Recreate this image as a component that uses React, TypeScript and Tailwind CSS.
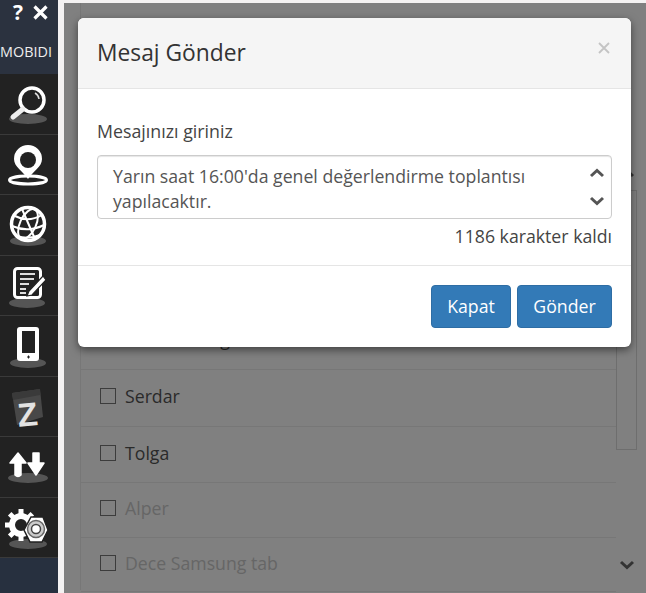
import React from "react";

const Shadow = ({ cy, rx = 19, cx = 28 }: { cy: number; rx?: number; cx?: number }) => (
  <ellipse cx={cx} cy={cy} rx={rx} ry={5} fill="#555" />
);

const Row = ({ children }: { children: React.ReactNode }) => (
  <div className="h-[60.5px] border-b border-[#3a3a3a] shrink-0">
    <svg viewBox="0 0 58 60" className="w-[58px] h-[60px] block">
      {children}
    </svg>
  </div>
);

const gearTeeth = [0, 45, 90, 135, 180, 225, 270, 315];

const icons: React.ReactNode[] = [
  <>
    <Shadow cy={45} rx={19} />
    <circle cx={32} cy={26} r={12} fill="#222" stroke="#fff" strokeWidth={3.5} />
    <path d="M35 19a8 8 0 0 1 4 6" fill="none" stroke="#ddd" strokeWidth={1.5} />
    <path d="M23 35L13 43" stroke="#eee" strokeWidth={5} strokeLinecap="round" />
  </>,
  <>
    <ellipse cx={28} cy={45} rx={18.5} ry={4} fill="none" stroke="#fff" strokeWidth={3} />
    <path d="M28 44C23 36 14 32 14 24a14 14 0 0 1 28 0C42 32 33 36 28 44Z" fill="#fff" />
    <circle cx={28} cy={25} r={8} fill="#222" />
  </>,
  <>
    <Shadow cy={46} rx={18} />
    <circle cx={28} cy={29} r={16.5} fill="#222" stroke="#fff" strokeWidth={3.5} />
    <g fill="none" stroke="#fff" strokeWidth={2}>
      <ellipse cx={28} cy={29} rx={8} ry={16} transform="rotate(25 28 29)" />
      <path d="M15 21Q28 28 42 20M12 31Q28 38 44 30M17 41Q28 45 40 40M22 14L35 44" />
    </g>
  </>,
  <>
    <Shadow cy={47} rx={18} cx={27} />
    <rect x={14.5} y={12.5} width={26} height={29} rx={3} fill="#222" stroke="#fff" strokeWidth={3} />
    <path d="M20 18h15M20 23h14M20 28h9M20 33h6M20 37h6" stroke="#ddd" strokeWidth={2} />
    <path d="M29 35l-2 5 5-1L46 24l-3-4Z" fill="#fff" stroke="#222" strokeWidth={1.2} />
  </>,
  <>
    <Shadow cy={47} rx={18} />
    <rect x={17} y={11} width={22} height={34} rx={3} fill="#fff" />
    <rect x={22} y={15} width={13} height={22} fill="#222" />
    <path d="M28.5 39.5v3M27 41h3" stroke="#222" strokeWidth={1} />
  </>,
  <>
    <path d="M12 16L40 12L43 40L17 48Z" fill="#484848" />
    <path d="M12 16L40 12L40 18L13 23Z" fill="#3a3a3a" />
    <text
      x={27.5}
      y={49}
      textAnchor="middle"
      transform="rotate(-5 27 38)"
      fontFamily="'Liberation Sans', sans-serif"
      fontWeight={700}
      fontSize={33}
      fill="#e2e2e2"
    >
      Z
    </text>
  </>,
  <>
    <Shadow cy={41} rx={20} />
    <path d="M18 16L10 26H15V38Q18 41 21 38V26H26Z" fill="#fff" stroke="#fff" strokeWidth={1.5} strokeLinejoin="round" />
    <path d="M33 16V26H28L36 38L44 26H39V16Z" fill="#fff" stroke="#fff" strokeWidth={1.5} strokeLinejoin="round" />
  </>,
  <>
    <Shadow cy={46} rx={19} />
    <circle cx={21} cy={27} r={9} fill="none" stroke="#fff" strokeWidth={6} />
    {gearTeeth.map((a) => (
      <rect key={a} x={18.5} y={11} width={5} height={6} fill="#fff" transform={`rotate(${a} 21 27)`} />
    ))}
    <path d="M31 19H43L48 32L42 44H30L24 32Z" fill="#fff" stroke="#222" strokeWidth={1.5} />
    <circle cx={36} cy={31} r={8.5} fill="#ccc" stroke="#666" strokeWidth={1.5} />
    <circle cx={36} cy={31} r={4.5} fill="#fff" stroke="#444" strokeWidth={1.5} />
  </>,
];

const ListRow = ({ label, muted, h }: { label: string; muted?: boolean; h: string }) => (
  <div className={`${h} flex items-center border-b border-[#777] pl-[19px] pb-[4px] gap-[9px] shrink-0`}>
    <span className="w-[16px] h-[16px] border border-[#3c3c3c] shrink-0" />
    <span className={`text-[17.7px] leading-[24px] ${muted ? "text-[#666]" : "text-[#2a2a2a]"}`}>{label}</span>
  </div>
);

export default function App() {
  return (
    <div className="relative w-[646px] h-[593px] overflow-hidden flex bg-[#f4f2f2] font-['Open_Sans',sans-serif]">
      <aside className="w-[58px] shrink-0 flex flex-col bg-[#27303f]">
        <div className="h-[74px] shrink-0 flex flex-col bg-[#2b323f]">
          <div className="h-[24px] flex items-center justify-end gap-[10px] pr-[10px]">
            <span className="text-[21px] font-bold text-white leading-[24px]">?</span>
            <svg width="15" height="15" viewBox="0 0 15 15">
              <path d="M1.5 1.5L13.5 13.5M13.5 1.5L1.5 13.5" stroke="#fff" strokeWidth="3.2" />
            </svg>
          </div>
          <div className="mt-[21px] pr-[7px] text-[14.4px] leading-none text-[#eee] text-center whitespace-nowrap">MOBIDI</div>
        </div>
        <div className="bg-[#222]">
          {icons.map((icon, i) => (
            <Row key={i}>{icon}</Row>
          ))}
        </div>
      </aside>

      <main className="ml-[6px] mt-[3px] flex-1 bg-[#808080] flex pl-[16px] pr-[9px] pb-[3px]">
        <div className="flex-1 flex flex-col border-l border-[#777] pt-[57px]">
          <div className="h-[20px] border-y border-[#777] shrink-0" />
          <div className="h-[233px] shrink-0" />
          <ListRow label="Mehmet Bağcı - 05333373052" h="h-[57px]" />
          <ListRow label="Serdar" h="h-[57px]" />
          <ListRow label="Tolga" h="h-[56px]" />
          <ListRow label="Alper" muted h="h-[55px]" />
          <ListRow label="Dece Samsung tab" muted h="h-[54px]" />
        </div>
        <div className="w-[21px] shrink-0 flex flex-col items-center pt-[165px]">
          <svg width="16" height="10" viewBox="0 0 16 10">
            <path d="M2 8L8 2.5L14 8" fill="none" stroke="#333" strokeWidth="3" />
          </svg>
          <div className="w-full h-[260px] mt-[12px] border border-[#6e6e6e]" />
          <svg width="16" height="10" viewBox="0 0 16 10" className="mt-[110px]">
            <path d="M2 2L8 7.5L14 2" fill="none" stroke="#333" strokeWidth="3" />
          </svg>
        </div>
      </main>

      <div className="absolute left-[78px] top-[18px] w-[553px] h-[329px] bg-white rounded-[6px] shadow-[0_3px_9px_rgba(0,0,0,0.5)] flex flex-col overflow-hidden text-[#333]">
        <div className="h-[71px] shrink-0 bg-[#f5f5f5] border-b border-[#e5e5e5] flex items-center justify-between pl-[19px] pr-[20px]">
          <h4 className="text-[22.8px] text-[#333]">Mesaj Gönder</h4>
          <svg width="14" height="14" viewBox="0 0 14 14" className="mb-[11px]">
            <path d="M2 2L12 12M12 2L2 12" stroke="#c4c4c4" strokeWidth="1.8" />
          </svg>
        </div>
        <div className="flex-1 flex flex-col px-[19px] pt-[31px] border-b border-[#e5e5e5]">
          <label className="text-[17.8px] leading-[22px] text-[#444]">Mesajınızı giriniz</label>
          <div className="mt-[13px] h-[64px] border border-[#ccc] rounded-[4px] shadow-[inset_0_1px_1px_rgba(0,0,0,0.1)] flex pl-[15px] pr-[3px]">
            <div className="flex-1 pt-[8px] text-[17.7px] leading-[25px] text-[#555]">
              Yarın saat 16:00'da genel değerlendirme toplantısı yapılacaktır.
            </div>
            <div className="w-[22px] shrink-0 flex flex-col items-center pt-[12px] gap-[18px]">
              <svg width="16" height="10" viewBox="0 0 16 10">
                <path d="M2 8L8 2.5L14 8" fill="none" stroke="#555" strokeWidth="3" />
              </svg>
              <svg width="16" height="10" viewBox="0 0 16 10">
                <path d="M2 2L8 7.5L14 2" fill="none" stroke="#555" strokeWidth="3" />
              </svg>
            </div>
          </div>
          <div className="mt-[6px] text-right text-[17.7px] leading-[22px] text-[#444]">1186 karakter kaldı</div>
        </div>
        <div className="h-[81px] shrink-0 flex items-start justify-end gap-[6px] pt-[19px] pr-[19px]">
          <button className="w-[80px] h-[43px] rounded-[4px] bg-[#337ab7] border border-[#2e6da4] text-white text-[17.7px]">Kapat</button>
          <button className="w-[95px] h-[43px] rounded-[4px] bg-[#337ab7] border border-[#2e6da4] text-white text-[17.7px]">Gönder</button>
        </div>
      </div>
    </div>
  );
}
